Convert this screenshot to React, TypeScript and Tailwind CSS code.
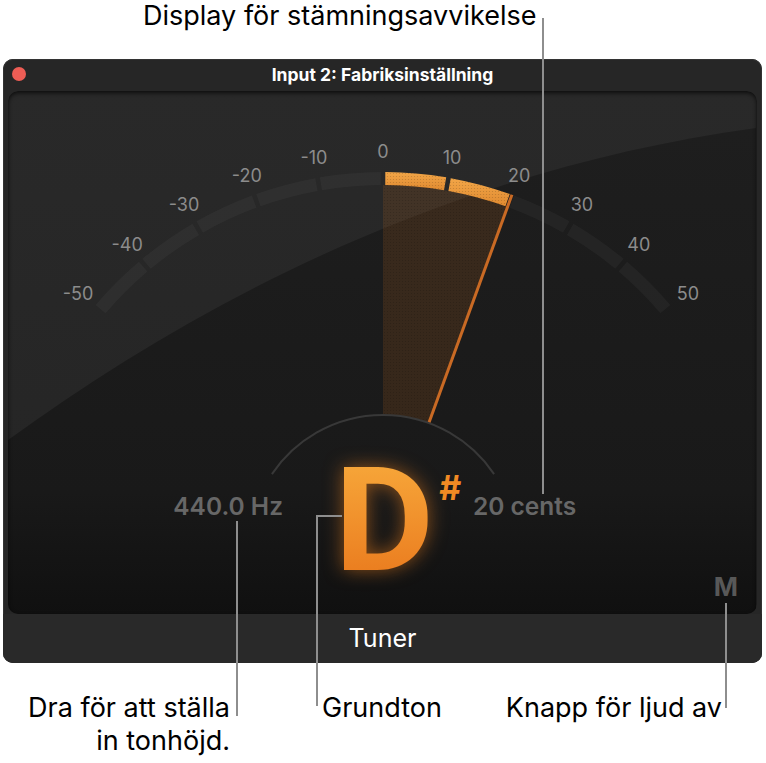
import React from 'react';

// gauge geometry, in panel coordinates
const CX = 375;
const CY = 458;
const R_IN = 364;
const R_OUT = 377;
const R_LABEL = 398;
const CENTS = 20;

const pt = (deg: number, r: number) => {
  const a = (deg * Math.PI) / 180;
  return [CX + r * Math.sin(a), CY - r * Math.cos(a)];
};

const sector = (a1: number, a2: number, r1: number, r2: number) => {
  const [x1, y1] = pt(a1, r2);
  const [x2, y2] = pt(a2, r2);
  const [x3, y3] = pt(a2, r1);
  const [x4, y4] = pt(a1, r1);
  return `M${x1} ${y1} A${r2} ${r2} 0 0 1 ${x2} ${y2} L${x3} ${y3} A${r1} ${r1} 0 0 0 ${x4} ${y4} Z`;
};

const arc = (a1: number, a2: number, r: number) => {
  const [x1, y1] = pt(a1, r);
  const [x2, y2] = pt(a2, r);
  return `M${x1} ${y1} A${r} ${r} 0 0 1 ${x2} ${y2}`;
};

function Gauge() {
  const segments = [-5, -4, -3, -2, -1, 0, 1, 2, 3, 4];
  const labels = [-50, -40, -30, -20, -10, 0, 10, 20, 30, 40, 50];
  const [n1x, n1y] = pt(CENTS, 134);
  const [n2x, n2y] = pt(CENTS, R_OUT);

  return (
    <svg className="absolute inset-0" width={748} height={523} viewBox="0 0 748 523">
      <defs>
        <linearGradient id="upper" x1="0" y1="0" x2="0" y2="1">
          <stop offset="0" stopColor="#292929" />
          <stop offset="1" stopColor="#242424" />
        </linearGradient>
        <linearGradient id="lower" x1="0" y1="0" x2="0" y2="1">
          <stop offset="0" stopColor="#1e1e1e" />
          <stop offset="0.75" stopColor="#191919" />
          <stop offset="1" stopColor="#101010" />
        </linearGradient>
        <linearGradient id="lit" x1="0" y1="0" x2="0" y2="1">
          <stop offset="0" stopColor="#f2a648" />
          <stop offset="1" stopColor="#e08a30" />
        </linearGradient>
        <pattern id="dots" width="3" height="3" patternUnits="userSpaceOnUse">
          <circle cx="1.5" cy="1.5" r="0.6" fill="#000" fillOpacity="0.18" />
        </pattern>
      </defs>

      <rect width="748" height="523" fill="url(#upper)" />
      <path d="M0 349 C192 209, 442 79, 748 37 L748 523 L0 523 Z" fill="url(#lower)" />

      {/* scale segments, 10 cents each */}
      {segments.map(i => {
        const on = i >= 0 && (i + 1) * 10 <= CENTS;
        const d = sector(i * 10 + 0.35, (i + 1) * 10 - 0.35, R_IN, R_OUT);
        return (
          <g key={i}>
            <path d={d} fill={on ? 'url(#lit)' : 'rgba(255,255,255,0.035)'} />
            {on && <path d={d} fill="url(#dots)" />}
          </g>
        );
      })}

      {/* deviation wedge and needle */}
      <path d={sector(0, CENTS, 134, R_IN)} fill="rgba(170,95,30,0.2)" />
      <path d={sector(0, CENTS, 134, R_IN)} fill="url(#dots)" />
      <line x1={n1x} y1={n1y} x2={n2x} y2={n2y} stroke="#c96a24" strokeWidth="3" />

      <path d={arc(-56, 56, 134)} fill="none" stroke="#383838" strokeWidth="2" />

      {labels.map(v => {
        const [x, y] = pt(v, R_LABEL);
        return (
          <text
            key={v}
            x={x}
            y={y}
            textAnchor="middle"
            dominantBaseline="central"
            fill="#8c8c8c"
            fontSize="18"
            fontFamily="Inter, sans-serif"
          >
            {v}
          </text>
        );
      })}
    </svg>
  );
}

export default function App() {
  return (
    <div className="relative w-[766px] h-[763px] bg-white font-['Inter',sans-serif] overflow-hidden">
      <div className="h-[59px] pl-[143px] text-[27px] leading-[31px] text-black">Display för stämningsavvikelse</div>

      {/* plugin window */}
      <div className="ml-[3px] w-[759px] h-[604px] rounded-[10px] bg-[#262626] flex flex-col shadow-[inset_0_0_0_1px_#333]">
        <div className="relative h-[32px] flex items-center justify-center">
          <span className="absolute left-[9px] top-[8px] w-[14px] h-[14px] rounded-full bg-[#ee5d55]" />
          <span className="text-white text-[17.5px] font-bold">Input 2: Fabriksinställning</span>
        </div>

        <div className="relative mx-[5px] h-[523px] rounded-[10px] overflow-hidden">
          <Gauge />
          <div className="relative h-full shadow-[inset_0_2px_4px_rgba(0,0,0,0.7)] rounded-[10px]">
            <div className="flex items-start pt-[357px]">
              <div className="w-[275px] mt-[46px] text-right text-[24.5px] leading-none font-semibold text-[#676767]">440.0 Hz</div>
              <div className="w-[190px] flex items-start">
                <span className="ml-[54px] text-[145px] leading-none font-bold font-['Roboto',sans-serif] scale-x-[1.06] bg-gradient-to-b from-[#f8ab3c] to-[#e8761a] bg-clip-text text-transparent drop-shadow-[0_0_9px_rgba(240,130,30,0.55)]">D</span>
                <span className="ml-[8px] mt-[23px] text-[34px] leading-none font-bold text-[#f08a24]">#</span>
              </div>
              <div className="mt-[46px] text-[24.5px] leading-none font-semibold text-[#676767]">20 cents</div>
              <div className="ml-auto mr-[19px] mt-[126px] text-[26px] leading-none font-bold text-[#585858]">M</div>
            </div>
          </div>
        </div>

        <div className="flex-1 flex items-center justify-center bg-[#292929] rounded-b-[10px]">
          <span className="text-white text-[25px]">Tuner</span>
        </div>
      </div>

      {/* callout labels */}
      <div className="mt-[28px] flex pr-[44px] text-[27px] leading-[33px] text-black">
        <div className="w-[230px] text-right">
          Dra för att ställa
          <br />
          in tonhöjd.
        </div>
        <div className="ml-[92px]">Grundton</div>
        <div className="ml-auto">Knapp för ljud av</div>
      </div>

      {/* leader lines */}
      <svg className="absolute inset-0 pointer-events-none" width={766} height={763}>
        <g stroke="#8e8e8e" strokeWidth="2" fill="none">
          <path d="M543 18 V494" />
          <path d="M237 521 V716" />
          <path d="M317 706 V516 H342" />
          <path d="M726 603 V708" />
        </g>
      </svg>
    </div>
  );
}
